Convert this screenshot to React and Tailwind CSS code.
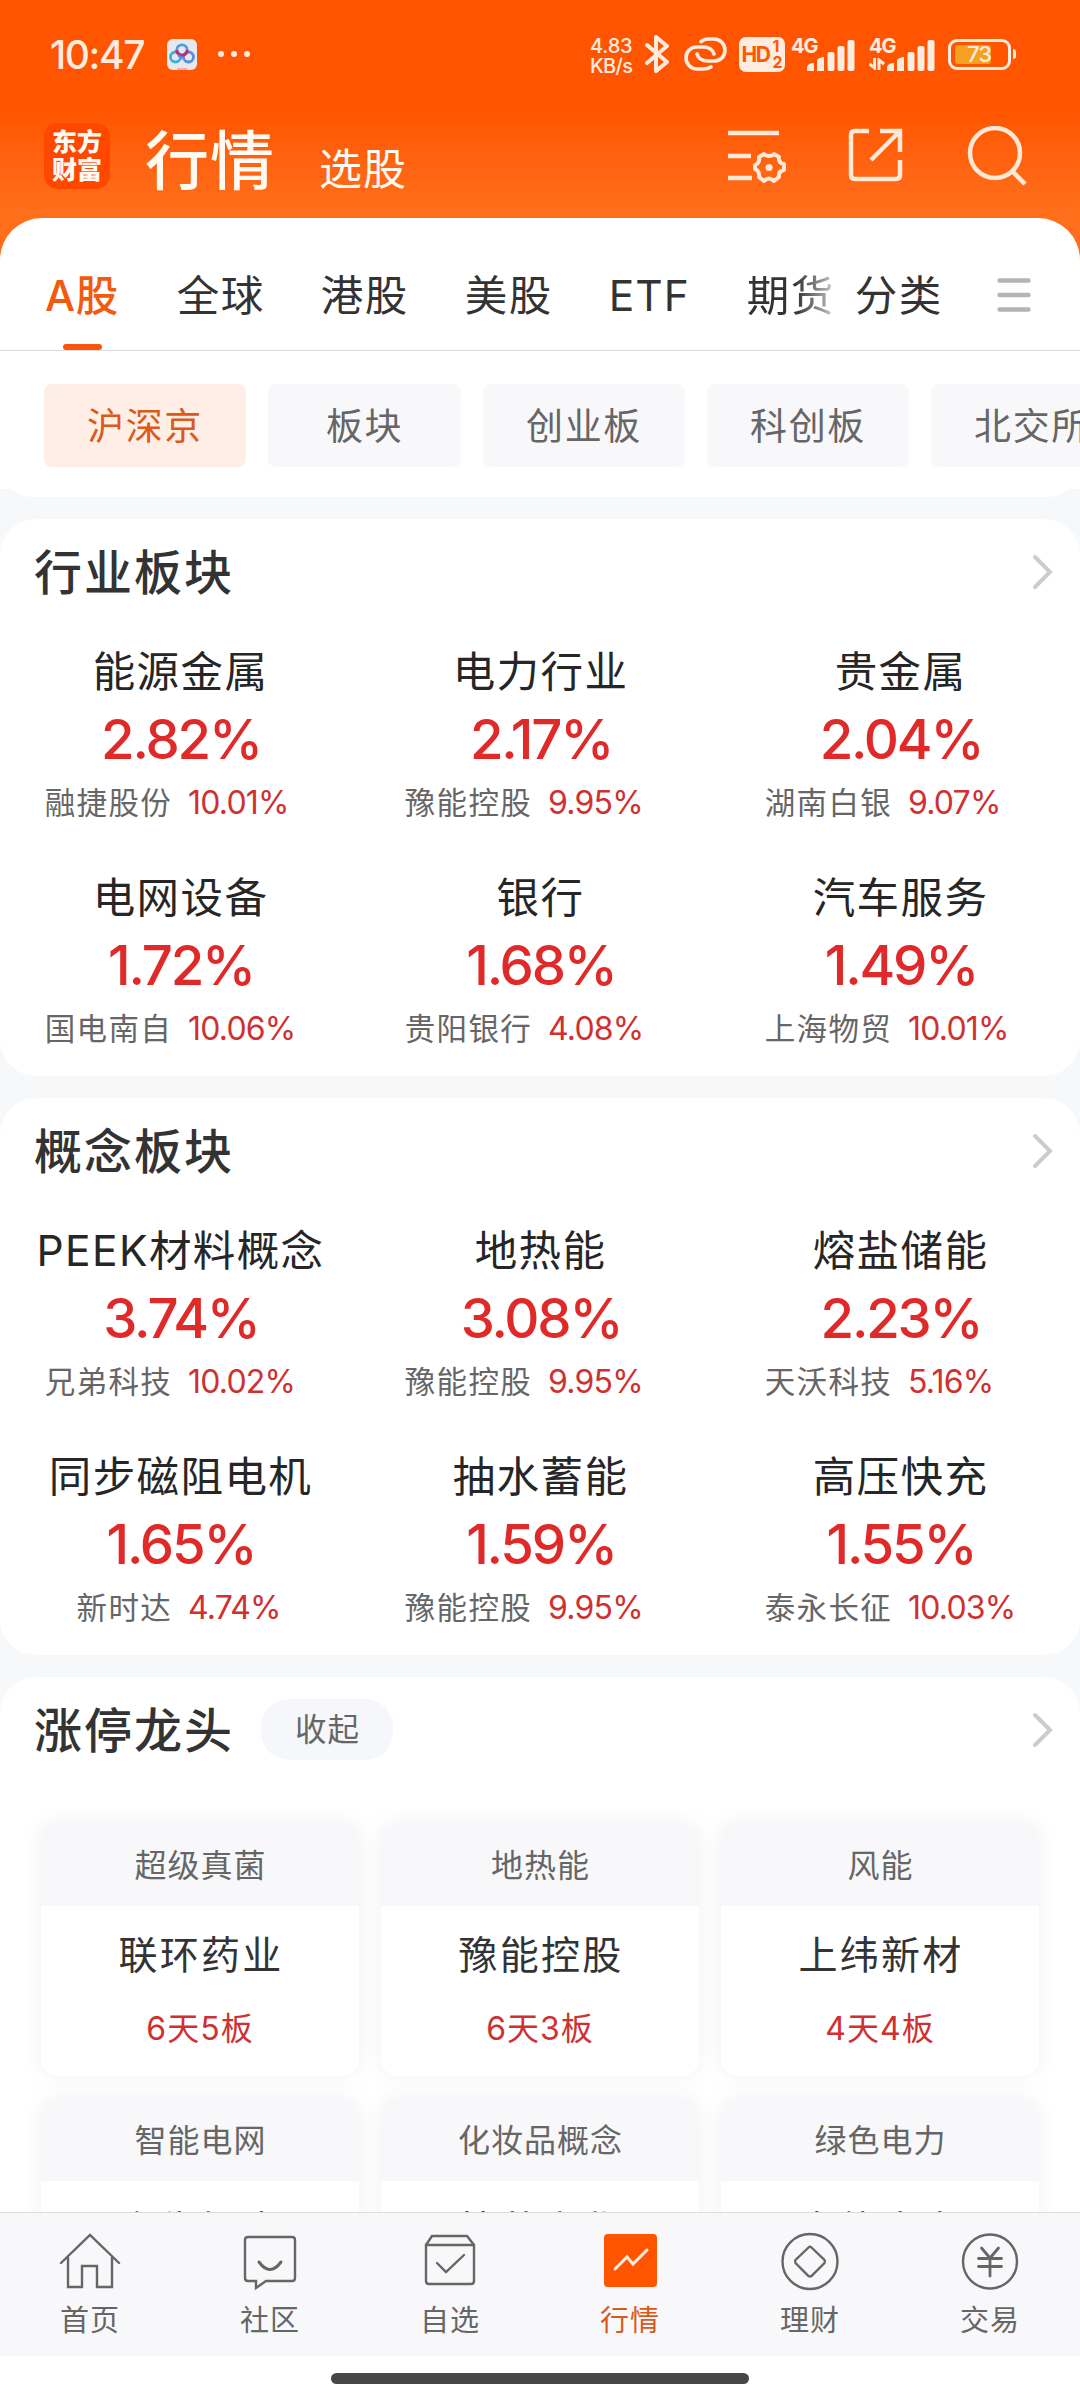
import React, { useState } from "react";

const tabs = ["A股", "全球", "港股", "美股", "ETF"];

const chips = [
  { name: "沪深京", width: "w-[202px]" },
  { name: "板块", width: "w-[193px]" },
  { name: "创业板", width: "w-[202px]" },
  { name: "科创板", width: "w-[202px]" },
  { name: "北交所", width: "w-[202px]" },
];

const industry = [
  { name: "能源金属", rate: "2.82%", stock: "融捷股份", stockRate: "10.01%" },
  { name: "电力行业", rate: "2.17%", stock: "豫能控股", stockRate: "9.95%" },
  { name: "贵金属", rate: "2.04%", stock: "湖南白银", stockRate: "9.07%" },
  { name: "电网设备", rate: "1.72%", stock: "国电南自", stockRate: "10.06%" },
  { name: "银行", rate: "1.68%", stock: "贵阳银行", stockRate: "4.08%" },
  { name: "汽车服务", rate: "1.49%", stock: "上海物贸", stockRate: "10.01%" },
];

const concept = [
  { name: "PEEK材料概念", rate: "3.74%", stock: "兄弟科技", stockRate: "10.02%" },
  { name: "地热能", rate: "3.08%", stock: "豫能控股", stockRate: "9.95%" },
  { name: "熔盐储能", rate: "2.23%", stock: "天沃科技", stockRate: "5.16%" },
  { name: "同步磁阻电机", rate: "1.65%", stock: "新时达", stockRate: "4.74%" },
  { name: "抽水蓄能", rate: "1.59%", stock: "豫能控股", stockRate: "9.95%" },
  { name: "高压快充", rate: "1.55%", stock: "泰永长征", stockRate: "10.03%" },
];

const leaders = [
  { tag: "超级真菌", name: "联环药业", days: "6天5板" },
  { tag: "地热能", name: "豫能控股", days: "6天3板" },
  { tag: "风能", name: "上纬新材", days: "4天4板" },
  { tag: "智能电网", name: "安靠智电", days: "3天3板" },
  { tag: "化妆品概念", name: "拉芳家化", days: "3天2板" },
  { tag: "绿色电力", name: "京能电力", days: "2天2板" },
];

const Signal = () => (
  <svg width="48" height="31" viewBox="0 0 48 31" fill="#ffece0">
    <path d="M0 31V27Q1 23 7 23V31Z" />
    <path d="M10 31V20Q11 18 17 17V31Z" />
    <rect x="20.5" y="12" width="7" height="19" rx="2" />
    <rect x="30.5" y="6" width="7" height="25" rx="2" />
    <rect x="40.5" y="0" width="7" height="31" rx="2" />
  </svg>
);

const StatusBar = () => (
  <div className="flex h-[108px] items-center text-[#ffece0]">
    <span className="ml-[50px] w-[96px] text-[39px] leading-none font-medium tracking-[-1.4px]">
      10:47
    </span>
    <svg className="ml-[21px]" width="30" height="31" viewBox="0 0 30 31" fill="none">
      <rect width="30" height="31" rx="6" fill="#e6e8ee" />
      <circle cx="8.5" cy="18" r="5" stroke="#3fb0dd" strokeWidth="2.8" />
      <circle cx="21.5" cy="18" r="5" stroke="#5b8fd8" strokeWidth="2.8" />
      <circle cx="15" cy="11" r="5.2" stroke="#4aa3d8" strokeWidth="2.8" />
      <path d="M9.8 11A5.2 5.2 0 0 0 20.2 11" stroke="#c22a72" strokeWidth="3" />
      <path d="M11 16L15 20" stroke="#4a9bd8" strokeWidth="2.4" />
      <path d="M10 30H20" stroke="#f07070" strokeWidth="1" />
    </svg>
    <div className="ml-[21px] flex gap-[7px]">
      <i className="h-[6px] w-[6px] rounded-full bg-[#ffece0]" />
      <i className="h-[6px] w-[6px] rounded-full bg-[#ffece0]" />
      <i className="h-[6px] w-[6px] rounded-full bg-[#ffece0]" />
    </div>

    <div className="ml-[340px] w-[47px] pt-[3px] text-[20px] leading-[20px] font-medium tracking-[-0.2px]">
      <div>4.83</div>
      <div className="tracking-[-0.7px]">KB/s</div>
    </div>
    <svg className="ml-[8px]" width="24" height="40" viewBox="0 0 24 40" fill="none" stroke="#ffece0" strokeWidth="4" strokeLinejoin="round" strokeLinecap="round">
      <path d="M2 11L22 28L11 37V3L22 12L2 29" />
    </svg>
    <svg className="ml-[15px]" width="43" height="34" viewBox="0 0 43 34" fill="none" stroke="#ffece0" strokeWidth="3.6" strokeLinecap="round">
      <path d="M17 4.5Q20 2 25 2H30C36 2 41 7 41 13C41 20 36 24 30 24H24C18 24 14 21 13 17" />
      <path d="M27 30Q24 32 19 32H13C7 32 2 27 2 21C2 14 7 10 13 10H19C25 10 29 13 30 17" />
    </svg>
    <div className="ml-[12px] flex h-[35px] w-[46px] items-center justify-center rounded-[7px] bg-[#ffece0] text-[#ff5800]">
      <span className="text-[21px] leading-none font-bold tracking-[-1.5px]">HD</span>
      <span className="ml-[3px] flex flex-col text-[16px] leading-[16px] font-bold">
        <span>1</span>
        <span>2</span>
      </span>
    </div>
    <div className="ml-[6px] flex h-[33px] w-[65px]">
      <span className="-mr-[12px] w-[28px] text-[20px] leading-[16px] font-bold tracking-[-1px]">4G</span>
      <div className="mt-[2px]"><Signal /></div>
    </div>
    <div className="ml-[13px] flex h-[33px] w-[67px]">
      <div className="-mr-[11px] w-[29px]">
        <span className="block text-[20px] leading-[16px] font-bold tracking-[-1px]">4G</span>
        <svg className="mt-[4px]" width="16" height="12" viewBox="0 0 16 12" fill="none" stroke="#ffece0" strokeWidth="3">
          <path d="M5.5 0V10L0.5 6M10 12V2L15 6" />
        </svg>
      </div>
      <div className="mt-[2px]"><Signal /></div>
    </div>
    <div className="ml-[12px] flex items-center">
      <div className="flex h-[31px] w-[63px] items-center rounded-[9px] border-[3px] border-[#ffece0] pl-[4px]">
        <div className="flex h-[19px] w-[36px] items-center rounded-[3px] bg-[#f5a020] pl-[12px] text-[22px] leading-none font-medium tracking-[-1px]">
          73
        </div>
      </div>
      <i className="ml-[2px] h-[10px] w-[3px] rounded-r-[3px] bg-[#ffece0]" />
    </div>
  </div>
);

const Header = () => (
  <div className="flex h-[110px] items-start text-[#fffaf2]">
    <div className="mt-[15px] ml-[44px] flex h-[66px] w-[66px] flex-col items-center justify-center rounded-[14px] bg-[#ff4700] text-[25px] leading-[28px] font-black">
      <span>东方</span>
      <span>财富</span>
    </div>
    <span className="mt-[21px] ml-[35px] text-[64px] leading-[64px] font-medium tracking-[1px]">行情</span>
    <span className="mt-[37px] ml-[44px] text-[43px] leading-[48px] tracking-[1px]">选股</span>
    <svg className="mt-[16px] ml-[320px]" width="62" height="68" viewBox="0 0 62 68" fill="none" stroke="#ffe9d6" strokeWidth="4.5">
      <path d="M1 9H52M1 32H24M1 54H25" />
      <path
        d="M37 30Q42 34 47 30L52 33Q51 39 57 40V46Q51 47 52 53L47 57Q42 52 37 57L32 53Q33 47 28 45V41Q33 39 32 33Z"
        strokeWidth="4"
        strokeLinejoin="round"
      />
      <circle cx="42" cy="43.5" r="3.6" fill="#ffe9d6" stroke="none" />
    </svg>
    <svg className="mt-[18px] ml-[57px]" width="58" height="58" viewBox="0 0 58 58" fill="none" stroke="#ffe9d6" strokeWidth="4.5">
      <path d="M23 5H9Q5 5 5 9V49Q5 53 9 53H50Q54 53 54 49V34" />
      <path d="M34 5H54V26M54 5L25 34" />
    </svg>
    <svg className="mt-[18px] ml-[61px]" width="64" height="64" viewBox="0 0 64 64" fill="none" stroke="#ffe9d6" strokeWidth="4.5">
      <circle cx="30" cy="27" r="25" />
      <path d="M47 45L60 58" />
    </svg>
  </div>
);

const Chevron = () => (
  <svg width="22" height="36" viewBox="0 0 22 36" fill="none" stroke="#cccccc" strokeWidth="4" strokeLinecap="round">
    <path d="M3 3L18 18L3 33" />
  </svg>
);

const SectionTitle = ({ title, children }) => (
  <div className="flex h-[106px] items-center pr-[26px] pl-[34px]">
    <h2 className="pt-[2px] text-[48px] leading-none font-medium tracking-[2px] text-[#333]">{title}</h2>
    {children}
    <div className="ml-auto flex"><Chevron /></div>
  </div>
);

const BoardSection = ({ title, items }) => (
  <section className="mb-[22px] h-[557px] rounded-[36px] bg-white">
    <SectionTitle title={title} />
    <div className="grid grid-cols-3">
      {items.map((item) => (
        <div key={item.name} className="h-[226px] pt-[21px]">
          <div className="pl-[1px] text-center text-[42.5px] leading-[52px] tracking-[1.4px] whitespace-nowrap text-[#262626]">
            {item.name}
          </div>
          <div className="mt-[8px] pl-[2px] text-center text-[54.5px] leading-[66px] font-medium tracking-[-2.2px] text-[#e02a2a]">
            {item.rate}
          </div>
          <div className="mt-[11px] flex items-center leading-[40px]">
            <span className="w-[172px] text-right text-[30.5px] tracking-[1.3px] text-[#666]">{item.stock}</span>
            <span className="ml-[16px] text-[32px] tracking-[-0.8px] text-[#d03030]">{item.stockRate}</span>
          </div>
        </div>
      ))}
    </div>
  </section>
);

const LeaderCard = ({ item }) => (
  <div className="h-[253px] rounded-[17px] bg-white text-center shadow-[0_0_22px_rgba(0,0,0,0.06)]">
    <div className="h-[83px] rounded-t-[17px] bg-[#f8f8fa] pl-[1px] text-[32px] leading-[86px] tracking-[1px] text-[#666]">
      {item.tag}
    </div>
    <div className="mt-[21px] pl-[2px] text-[39px] leading-[56px] tracking-[2.2px] text-[#333]">{item.name}</div>
    <div className="mt-[22px] text-[32px] leading-[48px] tracking-[1px] text-[#d03030]">{item.days}</div>
  </div>
);

const navItems = [
  {
    name: "首页",
    icon: (
      <path d="M2 31L31 3L60 31M9 26V55H23V34H38V55H53V26" />
    ),
  },
  {
    name: "社区",
    icon: (
      <>
        <path d="M9 5H53Q56 5 56 8V46Q56 49 53 49H27L17 56V49H9Q6 49 6 46V8Q6 5 9 5Z" />
        <path d="M20 30Q31 45 42 30" strokeWidth="3" />
      </>
    ),
  },
  {
    name: "自选",
    icon: (
      <>
        <path d="M7 13L13 4H48L55 13V49Q55 52 52 52H10Q7 52 7 49V13H55" />
        <path d="M18 31L27 40L45 23" />
      </>
    ),
  },
  {
    name: "行情",
    icon: (
      <>
        <rect x="5" y="2" width="53" height="53" rx="4" fill="#ff5500" stroke="none" />
        <path d="M16 37L28 25L34 32L48 18" stroke="#ffeedd" strokeWidth="3" />
      </>
    ),
  },
  {
    name: "理财",
    icon: (
      <>
        <circle cx="31" cy="29.5" r="27.5" />
        <path d="M29.5 15.5Q31 14 32.5 15.5L45.5 28Q46.5 29.5 45.5 31L32.5 44Q31 45 29.5 44L16.5 31Q15.5 29.5 16.5 28Z" />
      </>
    ),
  },
  {
    name: "交易",
    icon: (
      <>
        <circle cx="31" cy="29.5" r="27" />
        <path d="M22.5 16L31 26L39.5 16M31 26V44M19.5 26.5H42.5M19.5 34.5H42.5" strokeWidth="2.8" />
      </>
    ),
  },
];

const App = () => {
  const [tab, setTab] = useState("A股");
  const [chip, setChip] = useState("沪深京");
  const [nav, setNav] = useState("行情");

  return (
    <div className="flex h-[2400px] w-[1080px] flex-col overflow-hidden bg-[#f7f8fa] font-['Inter','Noto_Sans_CJK_SC',sans-serif]">
      <header className="h-[262px] shrink-0 bg-linear-to-b from-[#ff5500] from-42% to-[#ff6e1a] to-80%">
        <StatusBar />
        <Header />
      </header>

      <div className="relative -mt-[44px] h-[271px] shrink-0 rounded-t-[42px] bg-white">
        <div className="flex h-[133px] border-b border-[#dcdcdc] text-[42.5px] leading-[155px] tracking-[1.5px] text-[#333]">
          <div className="flex pl-[45px]">
            {tabs.map((t) => (
              <button
                key={t}
                onClick={() => setTab(t)}
                className={
                  t === tab
                    ? "relative mr-[58px] font-medium tracking-[0.5px] text-[#f25a10]"
                    : t === "ETF"
                      ? "relative mr-[57px] tracking-[1px]"
                      : "relative mr-[56px]"
                }
              >
                {t}
                {t === tab && (
                  <i className="absolute top-[126px] left-[18px] h-[6px] w-[39px] rounded-[3px] bg-[#fb550c]" />
                )}
              </button>
            ))}
            <span className="bg-linear-to-r from-[#333] from-55% to-[#d0d0d0] bg-clip-text text-transparent">期货</span>
          </div>
          <span className="ml-[20px]">分类</span>
          <svg className="mt-[59px] ml-[54px]" width="34" height="36" viewBox="0 0 34 36" stroke="#b4b4b4" strokeWidth="4.4" strokeLinecap="round">
            <path d="M2.5 3.5H31.5M2.5 18H31.5M2.5 32.5H31.5" />
          </svg>
        </div>
        <div className="flex gap-[22px] overflow-hidden pt-[33px] pl-[44px]">
          {chips.map((c) => (
            <button
              key={c.name}
              onClick={() => setChip(c.name)}
              className={`h-[83px] shrink-0 rounded-[8px] pt-[2px] text-[37px] leading-[81px] tracking-[1.6px] ${c.width} ${
                c.name === chip ? "bg-[#ffeee6] text-[#d95a1a]" : "bg-[#f8f8fa] text-[#666]"
              }`}
            >
              {c.name}
            </button>
          ))}
        </div>
      </div>
      <div className="mb-[22px] flex h-[8px] shrink-0 items-end overflow-hidden">
        <div className="h-[66px] w-full shrink-0 rounded-[33px] bg-white" />
      </div>

      <main className="min-h-0 flex-1 overflow-hidden">
        <BoardSection title="行业板块" items={industry} />
        <BoardSection title="概念板块" items={concept} />
        <section className="rounded-t-[36px] bg-white pb-10">
          <SectionTitle title="涨停龙头">
            <button className="-mt-[2px] ml-[27px] h-[61px] w-[132px] rounded-[28px] bg-[#f5f7fa] pt-[1px] pl-[1px] text-[31.5px] leading-[60px] tracking-[1px] text-[#666]">
              收起
            </button>
          </SectionTitle>
          <div className="grid grid-cols-3 gap-[22px] px-[41px] pt-[40px]">
            {leaders.map((item) => (
              <LeaderCard key={item.tag} item={item} />
            ))}
          </div>
        </section>
      </main>

      <nav className="relative flex h-[144px] shrink-0 border-t border-[#dcdcdc] bg-[#f8f8fa]">
        {navItems.map((n) => (
          <button
            key={n.name}
            onClick={() => setNav(n.name)}
            className={`flex flex-1 flex-col items-center pt-[19px] ${n.name === nav ? "text-[#d9591a]" : "text-[#666]"}`}
          >
            <svg className="-ml-px" width="62" height="60" viewBox="0 0 62 60" fill="none" stroke="#666" strokeWidth="2.4" strokeLinecap="round">
              {n.icon}
            </svg>
            <span className="mt-[9px] text-[29px] leading-[40px] tracking-[1px]">{n.name}</span>
          </button>
        ))}
      </nav>
      <div className="relative flex h-[44px] shrink-0 justify-center bg-white pt-[17px]">
        <i className="h-[11px] w-[418px] rounded-full bg-[#474747]" />
      </div>
    </div>
  );
};

export default App;
